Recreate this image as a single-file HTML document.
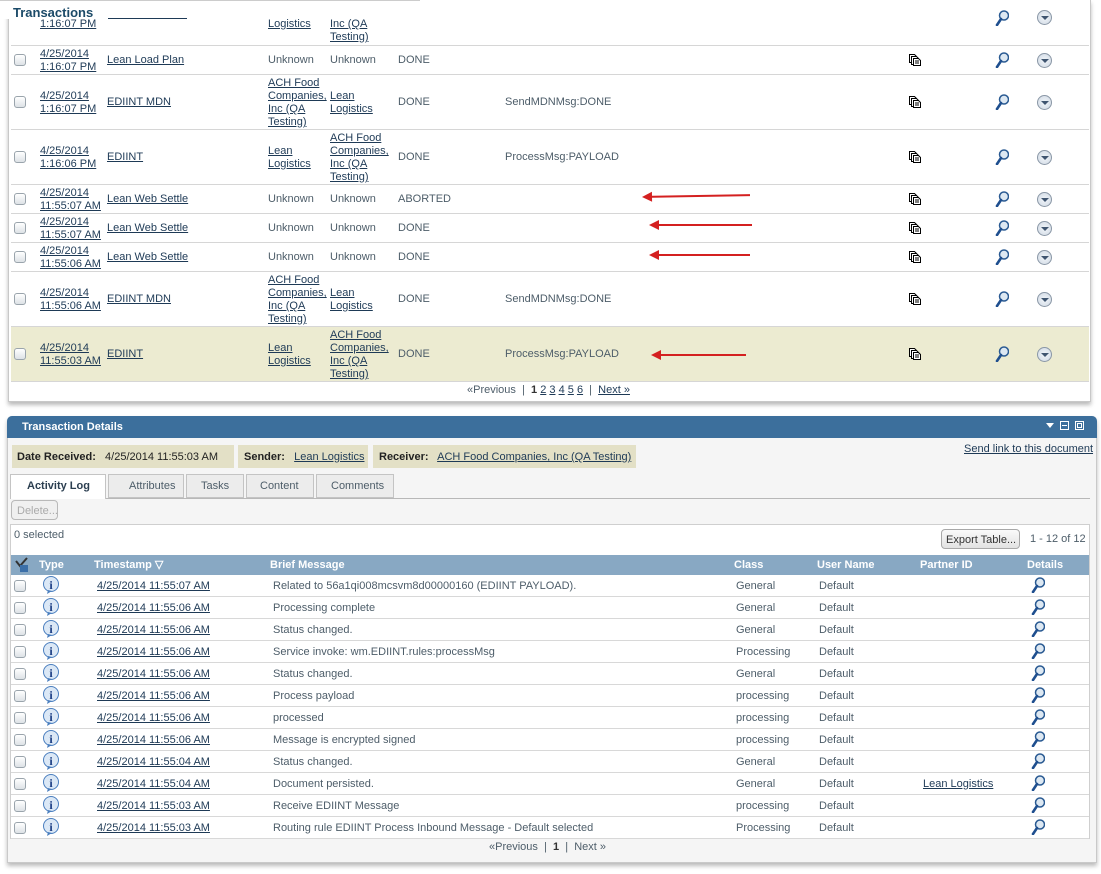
<!DOCTYPE html>
<html><head><meta charset="utf-8">
<style>
*{margin:0;padding:0;box-sizing:border-box}
body{width:1101px;height:873px;background:#fff;font-family:"Liberation Sans",Tahoma,sans-serif;font-size:11px;color:#4d5d69;position:relative;overflow:hidden}
.a{position:absolute;white-space:nowrap}
a,.l{color:#1e3a56;text-decoration:underline}
.cb{position:absolute;width:12px;height:12px;border:1px solid #9aa4ac;border-radius:3px;background:linear-gradient(#fff,#dde2e6)}
.row{position:absolute;left:11px;width:1078px;border-bottom:1px solid #d6d6d6}
.lh{line-height:13px}
.dc{position:absolute;width:11px;height:11px}
.mag{position:absolute;width:14px;height:16px}
.cir{position:absolute;width:15px;height:15px;border-radius:50%;border:1px solid #8a97a6;background:radial-gradient(#f2f6fa,#cfd8e3)}
.cir:after{content:"";position:absolute;left:3px;top:5px;border-left:4px solid transparent;border-right:4px solid transparent;border-top:4px solid #3f5570}
.arr{position:absolute;height:2px;background:#d42020}
.arr:before{content:"";position:absolute;left:-3px;top:-4px;border-top:5px solid transparent;border-bottom:5px solid transparent;border-right:10px solid #d42020}
.brow{position:absolute;left:11px;width:1078px;height:22px;border-bottom:1px solid #d8d8d8}
.ii{position:absolute;width:18px;height:18px}
.th{position:absolute;color:#fff;font-weight:bold}
.t1{margin-top:1px}
</style></head><body>
<div style="position:absolute;left:0;top:1px;width:1101px;height:873px">
<!-- top panel -->
<div class="a" style="left:8px;top:-1px;width:1083px;height:402px;border:1px solid #c8c8c8;border-top:none;box-shadow:0 3px 4px #bbb"></div>
<div class="a" style="left:0;top:-1px;width:420px;height:1px;background:#ccc"></div>

<div class="row" style="top:21px;height:24px"></div>
<div class="a l" style="left:40px;top:17px">1:16:07 PM</div>
<div class="a" style="left:107px;top:17px;width:80px;border-bottom:1px solid #1e3a56"></div>
<div class="a l" style="left:268px;top:17px">Logistics</div>
<div class="a l lh" style="left:330px;top:17px">Inc (QA<br>Testing)</div>
<div class="a" style="left:0;top:0;width:108px;height:18px;background:#fff"></div>
<div class="a" style="left:13px;top:4px;font-size:13px;font-weight:bold;color:#1b4a68">Transactions</div>

<!-- rows -->
<div class="row" style="top:45px;height:29px"></div>
<div class="cb" style="left:14px;top:53px"></div>
<div class="a l lh" style="left:40px;top:47px">4/25/2014<br>1:16:07 PM</div>
<div class="a l" style="left:107px;top:53px">Lean Load Plan</div>
<div class="a" style="left:268px;top:53px">Unknown</div><div class="a" style="left:330px;top:53px">Unknown</div><div class="a" style="left:398px;top:53px">DONE</div>

<div class="row" style="top:74px;height:55px"></div>
<div class="cb" style="left:14px;top:95px"></div>
<div class="a l lh" style="left:40px;top:89px">4/25/2014<br>1:16:07 PM</div>
<div class="a l" style="left:107px;top:95px">EDIINT MDN</div>
<div class="a l lh" style="left:268px;top:76px">ACH Food<br>Companies,<br>Inc (QA<br>Testing)</div>
<div class="a l lh" style="left:330px;top:89px">Lean<br>Logistics</div>
<div class="a" style="left:398px;top:95px">DONE</div><div class="a" style="left:505px;top:95px">SendMDNMsg:DONE</div>

<div class="row" style="top:129px;height:55px"></div>
<div class="cb" style="left:14px;top:150px"></div>
<div class="a l lh" style="left:40px;top:144px">4/25/2014<br>1:16:06 PM</div>
<div class="a l" style="left:107px;top:150px">EDIINT</div>
<div class="a l lh" style="left:268px;top:144px">Lean<br>Logistics</div>
<div class="a l lh" style="left:330px;top:131px">ACH Food<br>Companies,<br>Inc (QA<br>Testing)</div>
<div class="a" style="left:398px;top:150px">DONE</div><div class="a" style="left:505px;top:150px">ProcessMsg:PAYLOAD</div>

<div class="row" style="top:184px;height:29px"></div>
<div class="cb" style="left:14px;top:192px"></div>
<div class="a l lh" style="left:40px;top:186px">4/25/2014<br>11:55:07 AM</div>
<div class="a l" style="left:107px;top:192px">Lean Web Settle</div>
<div class="a" style="left:268px;top:192px">Unknown</div><div class="a" style="left:330px;top:192px">Unknown</div><div class="a" style="left:398px;top:192px">ABORTED</div>
<div class="arr" style="left:645px;top:194px;width:105px;transform:rotate(-1deg)"></div>

<div class="row" style="top:213px;height:29px"></div>
<div class="cb" style="left:14px;top:221px"></div>
<div class="a l lh" style="left:40px;top:215px">4/25/2014<br>11:55:07 AM</div>
<div class="a l" style="left:107px;top:221px">Lean Web Settle</div>
<div class="a" style="left:268px;top:221px">Unknown</div><div class="a" style="left:330px;top:221px">Unknown</div><div class="a" style="left:398px;top:221px">DONE</div>
<div class="arr" style="left:652px;top:223px;width:100px"></div>

<div class="row" style="top:242px;height:29px"></div>
<div class="cb" style="left:14px;top:250px"></div>
<div class="a l lh" style="left:40px;top:244px">4/25/2014<br>11:55:06 AM</div>
<div class="a l" style="left:107px;top:250px">Lean Web Settle</div>
<div class="a" style="left:268px;top:250px">Unknown</div><div class="a" style="left:330px;top:250px">Unknown</div><div class="a" style="left:398px;top:250px">DONE</div>
<div class="arr" style="left:652px;top:253px;width:98px"></div>

<div class="row" style="top:271px;height:55px"></div>
<div class="cb" style="left:14px;top:292px"></div>
<div class="a l lh" style="left:40px;top:286px">4/25/2014<br>11:55:06 AM</div>
<div class="a l" style="left:107px;top:292px">EDIINT MDN</div>
<div class="a l lh" style="left:268px;top:273px">ACH Food<br>Companies,<br>Inc (QA<br>Testing)</div>
<div class="a l lh" style="left:330px;top:286px">Lean<br>Logistics</div>
<div class="a" style="left:398px;top:292px">DONE</div><div class="a" style="left:505px;top:292px">SendMDNMsg:DONE</div>

<div class="row" style="top:326px;height:55px;background:#ecebd1"></div>
<div class="cb" style="left:14px;top:347px"></div>
<div class="a l lh" style="left:40px;top:341px">4/25/2014<br>11:55:03 AM</div>
<div class="a l" style="left:107px;top:347px">EDIINT</div>
<div class="a l lh" style="left:268px;top:341px">Lean<br>Logistics</div>
<div class="a l lh" style="left:330px;top:328px">ACH Food<br>Companies,<br>Inc (QA<br>Testing)</div>
<div class="a" style="left:398px;top:347px">DONE</div><div class="a" style="left:505px;top:347px">ProcessMsg:PAYLOAD</div>
<div class="arr" style="left:654px;top:353px;width:92px"></div>

<div class="a" style="left:467px;top:383px">«Previous &nbsp;| &nbsp;<b style="color:#333">1</b> <a>2</a> <a>3</a> <a>4</a> <a>5</a> <a>6</a> &nbsp;| &nbsp;<a>Next »</a></div>

<svg width="0" height="0" style="position:absolute"><defs>
<g id="doc"><path d="M0.5 0.5h5l2 2v6h-7z" fill="#fff" stroke="#000"/><path d="M2.5 2.5h5l2 2v6h-7z" fill="#fff" stroke="#000"/><path d="M4.5 4.5h5l2 2v5h-7z" fill="#fff" stroke="#000"/><path d="M6 7h4M6 9h4" stroke="#000"/></g>
<g id="mg"><circle cx="9" cy="5.5" r="4.5" fill="#dde8f2" stroke="#2a5a92" stroke-width="1.5"/><path d="M6 9 L2 15" stroke="#1f4f8f" stroke-width="2.6" stroke-linecap="round"/></g>
<g id="inf"><circle cx="9" cy="8" r="7.5" fill="#dbe8f6" stroke="#4b7fbf"/><path d="M6 14 L5 18 L10 15z" fill="#4b7fbf"/><text x="9" y="13" font-family="Liberation Serif" font-weight="bold" font-size="12" fill="#1d3f85" text-anchor="middle">i</text></g>
</defs></svg>
<svg class="dc" style="left:909px;top:53px;width:12px;height:12px"><use href="#doc"/></svg>
<svg class="dc" style="left:909px;top:95px;width:12px;height:12px"><use href="#doc"/></svg>
<svg class="dc" style="left:909px;top:150px;width:12px;height:12px"><use href="#doc"/></svg>
<svg class="dc" style="left:909px;top:192px;width:12px;height:12px"><use href="#doc"/></svg>
<svg class="dc" style="left:909px;top:221px;width:12px;height:12px"><use href="#doc"/></svg>
<svg class="dc" style="left:909px;top:250px;width:12px;height:12px"><use href="#doc"/></svg>
<svg class="dc" style="left:909px;top:292px;width:12px;height:12px"><use href="#doc"/></svg>
<svg class="dc" style="left:909px;top:347px;width:12px;height:12px"><use href="#doc"/></svg>

<svg class="mag" style="left:995px;top:51px"><use href="#mg"/></svg>
<svg class="mag" style="left:995px;top:93px"><use href="#mg"/></svg>
<svg class="mag" style="left:995px;top:148px"><use href="#mg"/></svg>
<svg class="mag" style="left:995px;top:190px"><use href="#mg"/></svg>
<svg class="mag" style="left:995px;top:219px"><use href="#mg"/></svg>
<svg class="mag" style="left:995px;top:248px"><use href="#mg"/></svg>
<svg class="mag" style="left:995px;top:290px"><use href="#mg"/></svg>
<svg class="mag" style="left:995px;top:345px"><use href="#mg"/></svg>
<svg class="mag" style="left:995px;top:9px"><use href="#mg"/></svg>

<div class="cir" style="left:1037px;top:52px"></div>
<div class="cir" style="left:1037px;top:94px"></div>
<div class="cir" style="left:1037px;top:149px"></div>
<div class="cir" style="left:1037px;top:191px"></div>
<div class="cir" style="left:1037px;top:220px"></div>
<div class="cir" style="left:1037px;top:249px"></div>
<div class="cir" style="left:1037px;top:291px"></div>
<div class="cir" style="left:1037px;top:346px"></div>
<div class="cir" style="left:1037px;top:9px"></div>

<!-- bottom panel -->
<div class="a" style="left:7px;top:415px;width:1090px;height:447px;background:#f5f5f5;border:1px solid #c9c9c9;border-radius:5px 5px 0 0;box-shadow:0 3px 4px #bbb"></div>
<div class="a" style="left:7px;top:415px;width:1090px;height:22px;background:#3c6f9c;border-radius:5px 5px 0 0"></div>
<div class="a" style="left:22px;top:420px;color:#fff;font-weight:bold">Transaction Details</div>
<div class="a" style="left:1046px;top:422px;border-left:4px solid transparent;border-right:4px solid transparent;border-top:5px solid #fff"></div>
<div class="a" style="left:1060px;top:420px;width:9px;height:9px;border:1px solid #fff"><div style="margin:3px 1px 0;height:1px;background:#fff"></div></div>
<div class="a" style="left:1075px;top:420px;width:9px;height:9px;border:1px solid #fff"><div style="margin:1px;height:5px;border:1px solid #fff"></div></div>

<div class="a" style="left:12px;top:444px;width:222px;height:23px;background:#e3e0c6"></div>
<div class="a" style="left:17px;top:450px;color:#222"><b>Date Received:</b>&nbsp;&nbsp; 4/25/2014 11:55:03 AM</div>
<div class="a" style="left:238px;top:444px;width:130px;height:23px;background:#e3e0c6"></div>
<div class="a" style="left:244px;top:450px;color:#222"><b>Sender:</b>&nbsp;&nbsp; <a>Lean Logistics</a></div>
<div class="a" style="left:373px;top:444px;width:263px;height:23px;background:#e3e0c6"></div>
<div class="a" style="left:379px;top:450px;color:#222"><b>Receiver:</b>&nbsp;&nbsp; <a>ACH Food Companies, Inc (QA Testing)</a></div>
<div class="a" style="left:964px;top:442px"><a>Send link to this document</a></div>

<div class="a" style="left:10px;top:497px;width:1080px;border-top:1px solid #b8b8b8"></div>
<div class="a" style="left:10px;top:473px;width:96px;height:25px;background:#fff;border:1px solid #c4c4c4;border-bottom:none"></div>
<div class="a" style="left:27px;top:479px;color:#2b3e50;font-weight:bold">Activity Log</div>
<div class="a" style="left:108px;top:473px;width:76px;height:24px;background:#ececec;border:1px solid #c4c4c4"></div><div class="a" style="left:129px;top:479px">Attributes</div>
<div class="a" style="left:186px;top:473px;width:58px;height:24px;background:#ececec;border:1px solid #c4c4c4"></div><div class="a" style="left:201px;top:479px">Tasks</div>
<div class="a" style="left:246px;top:473px;width:68px;height:24px;background:#ececec;border:1px solid #c4c4c4"></div><div class="a" style="left:260px;top:479px">Content</div>
<div class="a" style="left:316px;top:473px;width:78px;height:24px;background:#ececec;border:1px solid #c4c4c4"></div><div class="a" style="left:331px;top:479px">Comments</div>

<div class="a" style="left:11px;top:499px;width:47px;height:20px;border:1px solid #b9b9b9;border-radius:4px;background:#f0f0f0;color:#aaa;padding:4px 0 0 5px">Delete...</div>
<div class="a" style="left:10px;top:523px;width:1080px;height:315px;background:#fff;border:1px solid #cfcfcf"></div>
<div class="a" style="left:14px;top:528px">0 selected</div>
<div class="a" style="left:941px;top:528px;width:79px;height:20px;border:1px solid #a8a8a8;border-radius:4px;background:linear-gradient(#fafafa,#e2e2e2);color:#333;padding:4px 0 0 4px">Export Table...</div>
<div class="a" style="left:1030px;top:532px">1 - 12 of 12</div>

<div class="a" style="left:11px;top:554px;width:1078px;height:20px;background:#88a8c3"></div>
<svg class="a" style="left:14px;top:556px" width="16" height="16"><path d="M2 4 L6 9 L13 1" stroke="#333" stroke-width="2" fill="none"/><rect x="6" y="8" width="8" height="7" fill="#3b6fa8"/></svg>
<div class="th" style="left:39px;top:558px">Type</div>
<div class="th" style="left:94px;top:557px">Timestamp ▽</div>
<div class="th" style="left:270px;top:558px">Brief Message</div>
<div class="th" style="left:734px;top:558px">Class</div>
<div class="th" style="left:817px;top:558px">User Name</div>
<div class="th" style="left:920px;top:558px">Partner ID</div>
<div class="th" style="left:1027px;top:558px">Details</div>

<div class="brow" style="top:574px"></div><div class="brow" style="top:596px"></div><div class="brow" style="top:618px"></div><div class="brow" style="top:640px"></div><div class="brow" style="top:662px"></div><div class="brow" style="top:684px"></div><div class="brow" style="top:706px"></div><div class="brow" style="top:728px"></div><div class="brow" style="top:750px"></div><div class="brow" style="top:772px"></div><div class="brow" style="top:794px"></div><div class="brow" style="top:816px"></div>

<div class="cb" style="left:14px;top:579px"></div><svg class="ii" style="left:42px;top:575px"><use href="#inf"/></svg><div class="a" style="left:97px;top:579px"><a>4/25/2014 11:55:07 AM</a></div><div class="a" style="left:273px;top:579px">Related to 56a1qi008mcsvm8d00000160 (EDIINT PAYLOAD).</div><div class="a" style="left:736px;top:579px">General</div><div class="a" style="left:819px;top:579px">Default</div><svg class="mag" style="left:1031px;top:576px"><use href="#mg"/></svg>
<div class="cb" style="left:14px;top:601px"></div><svg class="ii" style="left:42px;top:597px"><use href="#inf"/></svg><div class="a" style="left:97px;top:601px"><a>4/25/2014 11:55:06 AM</a></div><div class="a" style="left:273px;top:601px">Processing complete</div><div class="a" style="left:736px;top:601px">General</div><div class="a" style="left:819px;top:601px">Default</div><svg class="mag" style="left:1031px;top:598px"><use href="#mg"/></svg>
<div class="cb" style="left:14px;top:623px"></div><svg class="ii" style="left:42px;top:619px"><use href="#inf"/></svg><div class="a" style="left:97px;top:623px"><a>4/25/2014 11:55:06 AM</a></div><div class="a" style="left:273px;top:623px">Status changed.</div><div class="a" style="left:736px;top:623px">General</div><div class="a" style="left:819px;top:623px">Default</div><svg class="mag" style="left:1031px;top:620px"><use href="#mg"/></svg>
<div class="cb" style="left:14px;top:645px"></div><svg class="ii" style="left:42px;top:641px"><use href="#inf"/></svg><div class="a" style="left:97px;top:645px"><a>4/25/2014 11:55:06 AM</a></div><div class="a" style="left:273px;top:645px">Service invoke: wm.EDIINT.rules:processMsg</div><div class="a" style="left:736px;top:645px">Processing</div><div class="a" style="left:819px;top:645px">Default</div><svg class="mag" style="left:1031px;top:642px"><use href="#mg"/></svg>
<div class="cb" style="left:14px;top:667px"></div><svg class="ii" style="left:42px;top:663px"><use href="#inf"/></svg><div class="a" style="left:97px;top:667px"><a>4/25/2014 11:55:06 AM</a></div><div class="a" style="left:273px;top:667px">Status changed.</div><div class="a" style="left:736px;top:667px">General</div><div class="a" style="left:819px;top:667px">Default</div><svg class="mag" style="left:1031px;top:664px"><use href="#mg"/></svg>
<div class="cb" style="left:14px;top:689px"></div><svg class="ii" style="left:42px;top:685px"><use href="#inf"/></svg><div class="a" style="left:97px;top:689px"><a>4/25/2014 11:55:06 AM</a></div><div class="a" style="left:273px;top:689px">Process payload</div><div class="a" style="left:736px;top:689px">processing</div><div class="a" style="left:819px;top:689px">Default</div><svg class="mag" style="left:1031px;top:686px"><use href="#mg"/></svg>
<div class="cb" style="left:14px;top:711px"></div><svg class="ii" style="left:42px;top:707px"><use href="#inf"/></svg><div class="a" style="left:97px;top:711px"><a>4/25/2014 11:55:06 AM</a></div><div class="a" style="left:273px;top:711px">processed</div><div class="a" style="left:736px;top:711px">processing</div><div class="a" style="left:819px;top:711px">Default</div><svg class="mag" style="left:1031px;top:708px"><use href="#mg"/></svg>
<div class="cb" style="left:14px;top:733px"></div><svg class="ii" style="left:42px;top:729px"><use href="#inf"/></svg><div class="a" style="left:97px;top:733px"><a>4/25/2014 11:55:06 AM</a></div><div class="a" style="left:273px;top:733px">Message is encrypted signed</div><div class="a" style="left:736px;top:733px">processing</div><div class="a" style="left:819px;top:733px">Default</div><svg class="mag" style="left:1031px;top:730px"><use href="#mg"/></svg>
<div class="cb" style="left:14px;top:755px"></div><svg class="ii" style="left:42px;top:751px"><use href="#inf"/></svg><div class="a" style="left:97px;top:755px"><a>4/25/2014 11:55:04 AM</a></div><div class="a" style="left:273px;top:755px">Status changed.</div><div class="a" style="left:736px;top:755px">General</div><div class="a" style="left:819px;top:755px">Default</div><svg class="mag" style="left:1031px;top:752px"><use href="#mg"/></svg>
<div class="cb" style="left:14px;top:777px"></div><svg class="ii" style="left:42px;top:773px"><use href="#inf"/></svg><div class="a" style="left:97px;top:777px"><a>4/25/2014 11:55:04 AM</a></div><div class="a" style="left:273px;top:777px">Document persisted.</div><div class="a" style="left:736px;top:777px">General</div><div class="a" style="left:819px;top:777px">Default</div><div class="a" style="left:923px;top:777px"><a>Lean Logistics</a></div><svg class="mag" style="left:1031px;top:774px"><use href="#mg"/></svg>
<div class="cb" style="left:14px;top:799px"></div><svg class="ii" style="left:42px;top:795px"><use href="#inf"/></svg><div class="a" style="left:97px;top:799px"><a>4/25/2014 11:55:03 AM</a></div><div class="a" style="left:273px;top:799px">Receive EDIINT Message</div><div class="a" style="left:736px;top:799px">processing</div><div class="a" style="left:819px;top:799px">Default</div><svg class="mag" style="left:1031px;top:796px"><use href="#mg"/></svg>
<div class="cb" style="left:14px;top:821px"></div><svg class="ii" style="left:42px;top:817px"><use href="#inf"/></svg><div class="a" style="left:97px;top:821px"><a>4/25/2014 11:55:03 AM</a></div><div class="a" style="left:273px;top:821px">Routing rule EDIINT Process Inbound Message - Default selected</div><div class="a" style="left:736px;top:821px">Processing</div><div class="a" style="left:819px;top:821px">Default</div><svg class="mag" style="left:1031px;top:818px"><use href="#mg"/></svg>

<div class="a" style="left:489px;top:840px">«Previous &nbsp;| &nbsp;<b style="color:#333">1</b> &nbsp;| &nbsp;Next »</div>
</div>
</body></html>
